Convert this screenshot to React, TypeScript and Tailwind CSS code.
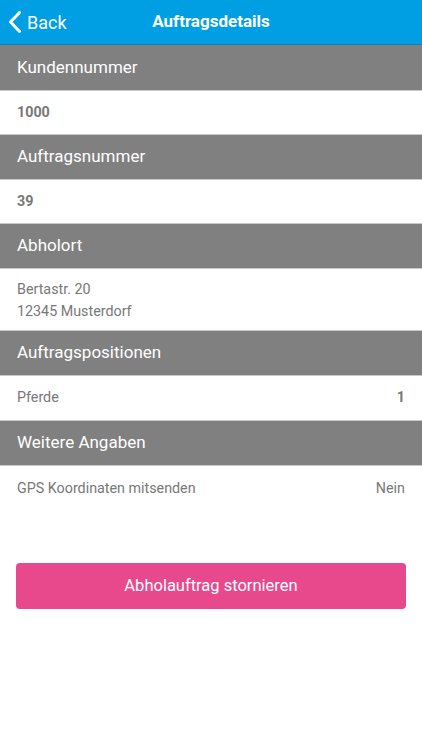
function SectionHeader({ title }: { title: string }) {
  return (
    <div className="h-[45px] bg-[#808080] border-t border-[#c8c8c8] flex items-center px-[17px]">
      <span className="text-white text-[17px]">{title}</span>
    </div>
  )
}

function Row({ children, className = "" }: { children: React.ReactNode; className?: string }) {
  return (
    <div className={`border-t border-[#c8c8c8] flex items-center px-[17px] text-[14.3px] text-[#787878] ${className}`}>
      {children}
    </div>
  )
}

export default function App() {
  return (
    <div className="w-[422px] h-[750px] bg-white flex flex-col" style={{ fontFamily: "Roboto, 'Noto Sans', sans-serif" }}>
      <div className="h-[45px] bg-[#009fe3] border-b border-[#0b7fb8] relative flex items-center shrink-0">
        <div className="absolute left-[8px] top-0 h-full flex items-center text-white">
          <svg width="14" height="22" viewBox="0 0 14 22" fill="none" className="mr-[5px]">
            <path d="M11.5 1.5 L2.5 11 L11.5 20.5" stroke="white" strokeWidth="3" strokeLinecap="round" strokeLinejoin="round" />
          </svg>
          <span className="text-[18px]">Back</span>
        </div>
        <div className="w-full text-center text-white font-bold text-[17px]">Auftragsdetails</div>
      </div>

      <div className="h-[45px] bg-[#808080] flex items-center px-[17px]">
        <span className="text-white text-[17px]">Kundennummer</span>
      </div>
      <Row className="h-[44px] font-bold">1000</Row>

      <SectionHeader title="Auftragsnummer" />
      <Row className="h-[44px] font-bold">39</Row>

      <SectionHeader title="Abholort" />
      <Row className="h-[62px]">
        <div className="leading-[22px]">
          <div>Bertastr. 20</div>
          <div>12345 Musterdorf</div>
        </div>
      </Row>

      <SectionHeader title="Auftragspositionen" />
      <Row className="h-[45px] justify-between">
        <span>Pferde</span>
        <span className="font-bold">1</span>
      </Row>

      <SectionHeader title="Weitere Angaben" />
      <Row className="h-[46px] justify-between">
        <span>GPS Koordinaten mitsenden</span>
        <span>Nein</span>
      </Row>

      <div className="px-[16px] mt-[52px]">
        <button className="w-full h-[46px] rounded-[4px] bg-[#e8488c] text-white text-[16.5px]">
          Abholauftrag stornieren
        </button>
      </div>
    </div>
  )
}
